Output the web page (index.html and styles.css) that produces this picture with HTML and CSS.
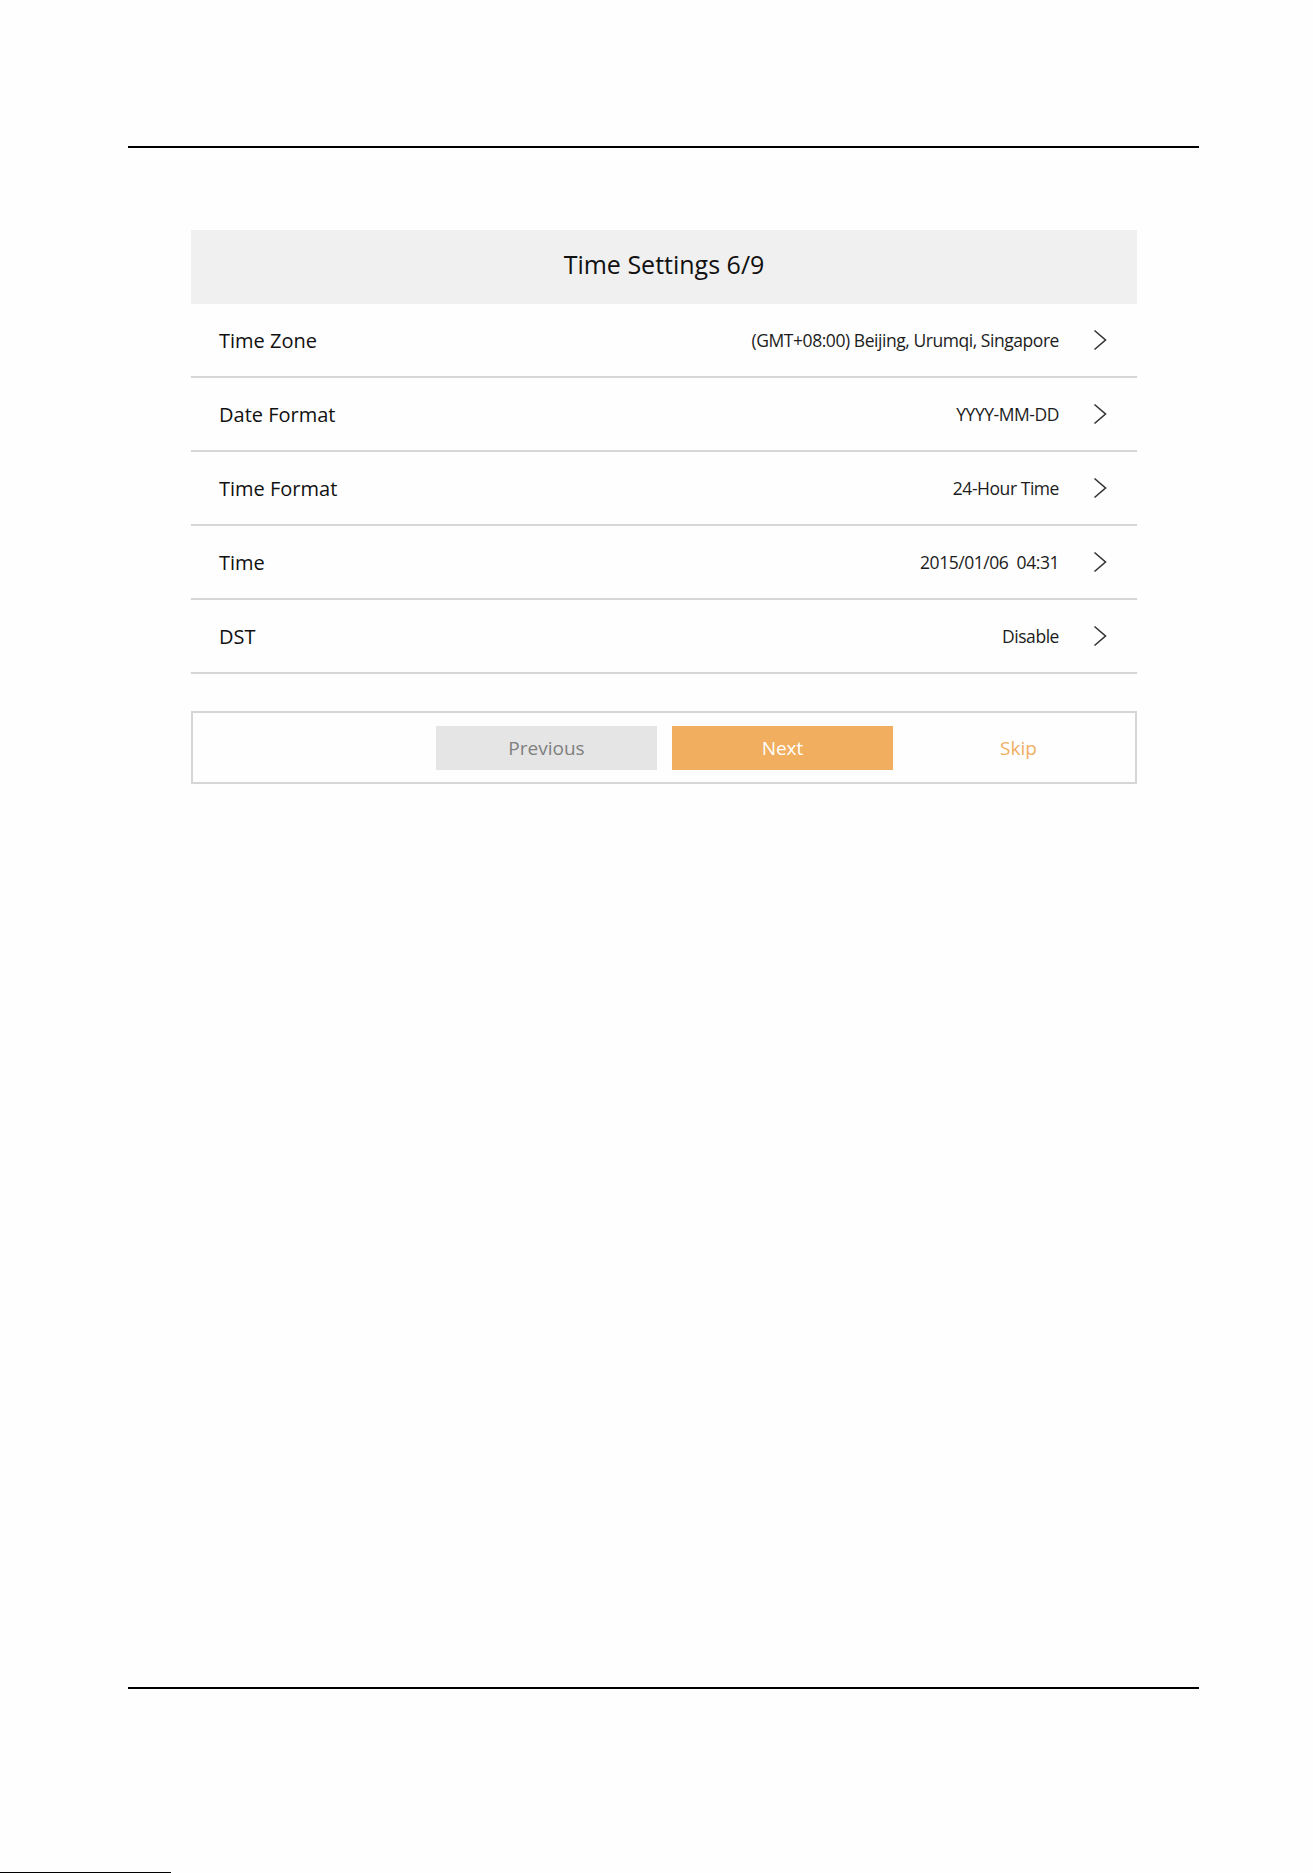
FILE: index.html
```html
<!DOCTYPE html>
<html lang="en">
<head>
    <meta charset="UTF-8">
    <title>Time Settings</title>
    <link rel="stylesheet" href="styles.css">
</head>
<body>
    <div class="page">
        <div class="rule"></div>

        <div class="panel">
            <div class="panel-header">Time Settings 6/9</div>

            <div class="setting-row">
                <span class="setting-label">Time Zone</span>
                <span class="setting-value">(GMT+08:00) Beijing, Urumqi, Singapore</span>
                <svg class="chevron" viewBox="0 0 14 22"><polyline points="1.5,1.5 12.5,11 1.5,20.5"/></svg>
            </div>
            <div class="setting-row">
                <span class="setting-label">Date Format</span>
                <span class="setting-value">YYYY-MM-DD</span>
                <svg class="chevron" viewBox="0 0 14 22"><polyline points="1.5,1.5 12.5,11 1.5,20.5"/></svg>
            </div>
            <div class="setting-row">
                <span class="setting-label">Time Format</span>
                <span class="setting-value">24-Hour Time</span>
                <svg class="chevron" viewBox="0 0 14 22"><polyline points="1.5,1.5 12.5,11 1.5,20.5"/></svg>
            </div>
            <div class="setting-row">
                <span class="setting-label">Time</span>
                <span class="setting-value">2015/01/06  04:31</span>
                <svg class="chevron" viewBox="0 0 14 22"><polyline points="1.5,1.5 12.5,11 1.5,20.5"/></svg>
            </div>
            <div class="setting-row">
                <span class="setting-label">DST</span>
                <span class="setting-value">Disable</span>
                <svg class="chevron" viewBox="0 0 14 22"><polyline points="1.5,1.5 12.5,11 1.5,20.5"/></svg>
            </div>

            <div class="button-bar">
                <button class="wizard-button btn-previous">Previous</button>
                <button class="wizard-button btn-next">Next</button>
                <button class="wizard-button btn-skip">Skip</button>
            </div>
        </div>

        <div class="rule rule-bottom"></div>
    </div>
    <div class="page-edge"></div>
</body>
</html>
```

FILE: styles.css
```css
:root {
    --header-bg: #f0f0f0;
    --divider: #d6d6d6;
    --accent: #f0ae5e;
    --muted-bg: #e5e5e5;
    --muted-text: #808080;
    --text-color: #111;
}

* {
    margin: 0;
    padding: 0;
    box-sizing: border-box;
}

body {
    font-family: 'Open Sans', sans-serif;
    background: #fefefe;
    color: var(--text-color);
    width: 1313px;
    height: 1873px;
    overflow: hidden;
    display: flex;
    flex-direction: column;
}

.page {
    flex: 1;
    padding: 146px 0 0 128px;
}

.rule {
    width: 1071px;
    height: 2px;
    background: #000;
}

.rule-bottom {
    margin-top: 903px;
}

.panel {
    width: 946px;
    margin: 82px 0 0 63px;
}

.panel-header {
    height: 74px;
    background: var(--header-bg);
    display: flex;
    align-items: center;
    justify-content: center;
    font-size: 25px;
    padding-bottom: 6px;
}

.setting-row {
    height: 74px;
    display: flex;
    align-items: center;
    padding: 0 30px 0 28px;
    border-bottom: 2px solid var(--divider);
}

.setting-label {
    font-size: 20px;
    flex: 1;
}

.setting-value {
    font-size: 17.5px;
    letter-spacing: -0.45px;
    color: #1c1c1c;
    white-space: pre;
    margin-right: 34px;
}

.chevron {
    width: 14px;
    height: 22px;
    fill: none;
    stroke: #333;
    stroke-width: 1.6;
}

.button-bar {
    height: 73px;
    margin-top: 37px;
    border: 2px solid var(--divider);
    display: flex;
    align-items: center;
    justify-content: flex-end;
    gap: 15px;
    padding-right: 6px;
}

.wizard-button {
    width: 221px;
    height: 44px;
    border: none;
    font-family: 'Open Sans', sans-serif;
    font-size: 19px;
    cursor: pointer;
}

.btn-previous {
    background: var(--muted-bg);
    color: var(--muted-text);
}

.btn-next {
    background: var(--accent);
    color: #fff;
}

.btn-skip {
    background: transparent;
    color: var(--accent);
}

.page-edge {
    width: 171px;
    height: 1px;
    background: #000;
}
```
